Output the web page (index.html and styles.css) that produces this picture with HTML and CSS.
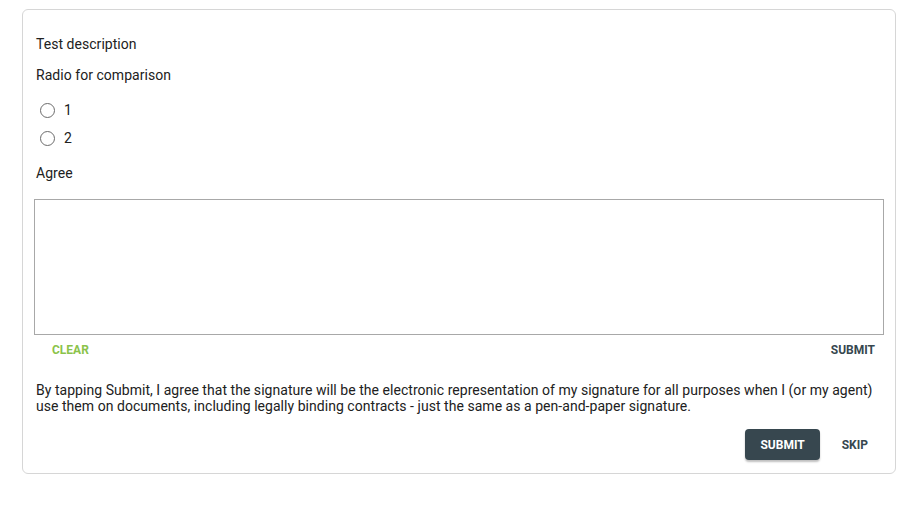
FILE: index.html
```html
<!DOCTYPE html>
<html>
<head>
<meta charset="utf-8">
<link rel="stylesheet" href="styles.css">
</head>
<body>
<div class="page">
  <div class="card">
    <div class="text">Test description</div>
    <div class="text">Radio for comparison</div>
    <div class="radios">
      <label class="radio"><span class="circle"></span><span>1</span></label>
      <label class="radio"><span class="circle"></span><span>2</span></label>
    </div>
    <div class="text">Agree</div>
    <div class="sigbox"></div>
    <div class="sigactions">
      <button class="tbtn clear">CLEAR</button>
      <button class="tbtn dark submit-small">SUBMIT</button>
    </div>
    <p class="legal">By tapping Submit, I agree that the signature will be the electronic representation of my signature for all purposes when I (or my agent) use them on documents, including legally binding contracts - just the same as a pen-and-paper signature.</p>
    <div class="actions">
      <button class="primary">SUBMIT</button>
      <button class="tbtn dark skip">SKIP</button>
    </div>
  </div>
</div>
</body>
</html>
```

FILE: styles.css
```css
html, body {
  margin: 0;
  padding: 0;
  background: #ffffff;
  font-family: Roboto, "Liberation Sans", sans-serif;
  color: #212121;
}
.page {
  padding: 9px 9px 0 22px;
}
.card {
  border: 1px solid #d6d6d6;
  border-radius: 6px;
  padding: 24px 11px 13px 11px;
  display: flex;
  flex-direction: column;
}
.text {
  font-size: 14px;
  line-height: 20px;
  padding-left: 2px;
  margin-bottom: 11px;
  letter-spacing: 0.04px;
}
.radios {
  display: flex;
  flex-direction: column;
  margin-bottom: 11px;
}
.radio {
  display: flex;
  align-items: center;
  height: 28px;
  font-size: 14px;
  padding-left: 6px;
}
.circle {
  width: 13px;
  height: 13px;
  border: 1.6px solid #6b6b6b;
  border-radius: 50%;
  margin-right: 9px;
}
.sigbox {
  height: 134px;
  border: 1px solid #a8a8a8;
  margin-top: 5px;
}
.sigactions {
  display: flex;
  justify-content: space-between;
  align-items: center;
  height: 30px;
}
.tbtn {
  background: none;
  border: none;
  font-family: Roboto, "Liberation Sans", sans-serif;
  font-weight: 700;
  font-size: 12px;
  padding: 0;
  height: 30px;
  cursor: pointer;
}
.clear {
  color: #8bc34a;
  margin-left: 18px;
}
.dark {
  color: #37474f;
}
.submit-small {
  margin-right: 9px;
}
.legal {
  font-size: 14px;
  line-height: 16px;
  margin: 17px 0 0 0;
  padding-left: 2px;
  letter-spacing: 0.04px;
}
.actions {
  display: flex;
  justify-content: flex-end;
  align-items: center;
  gap: 6px;
  margin-top: 15px;
}
.primary {
  background: #37474f;
  color: #ffffff;
  border: none;
  border-radius: 4px;
  font-family: Roboto, "Liberation Sans", sans-serif;
  font-weight: 700;
  font-size: 12px;
  height: 31px;
  padding: 0 15px;
  box-shadow: 0 2px 2px rgba(0,0,0,0.25);
}
.skip {
  padding: 0 16px;
}
```
